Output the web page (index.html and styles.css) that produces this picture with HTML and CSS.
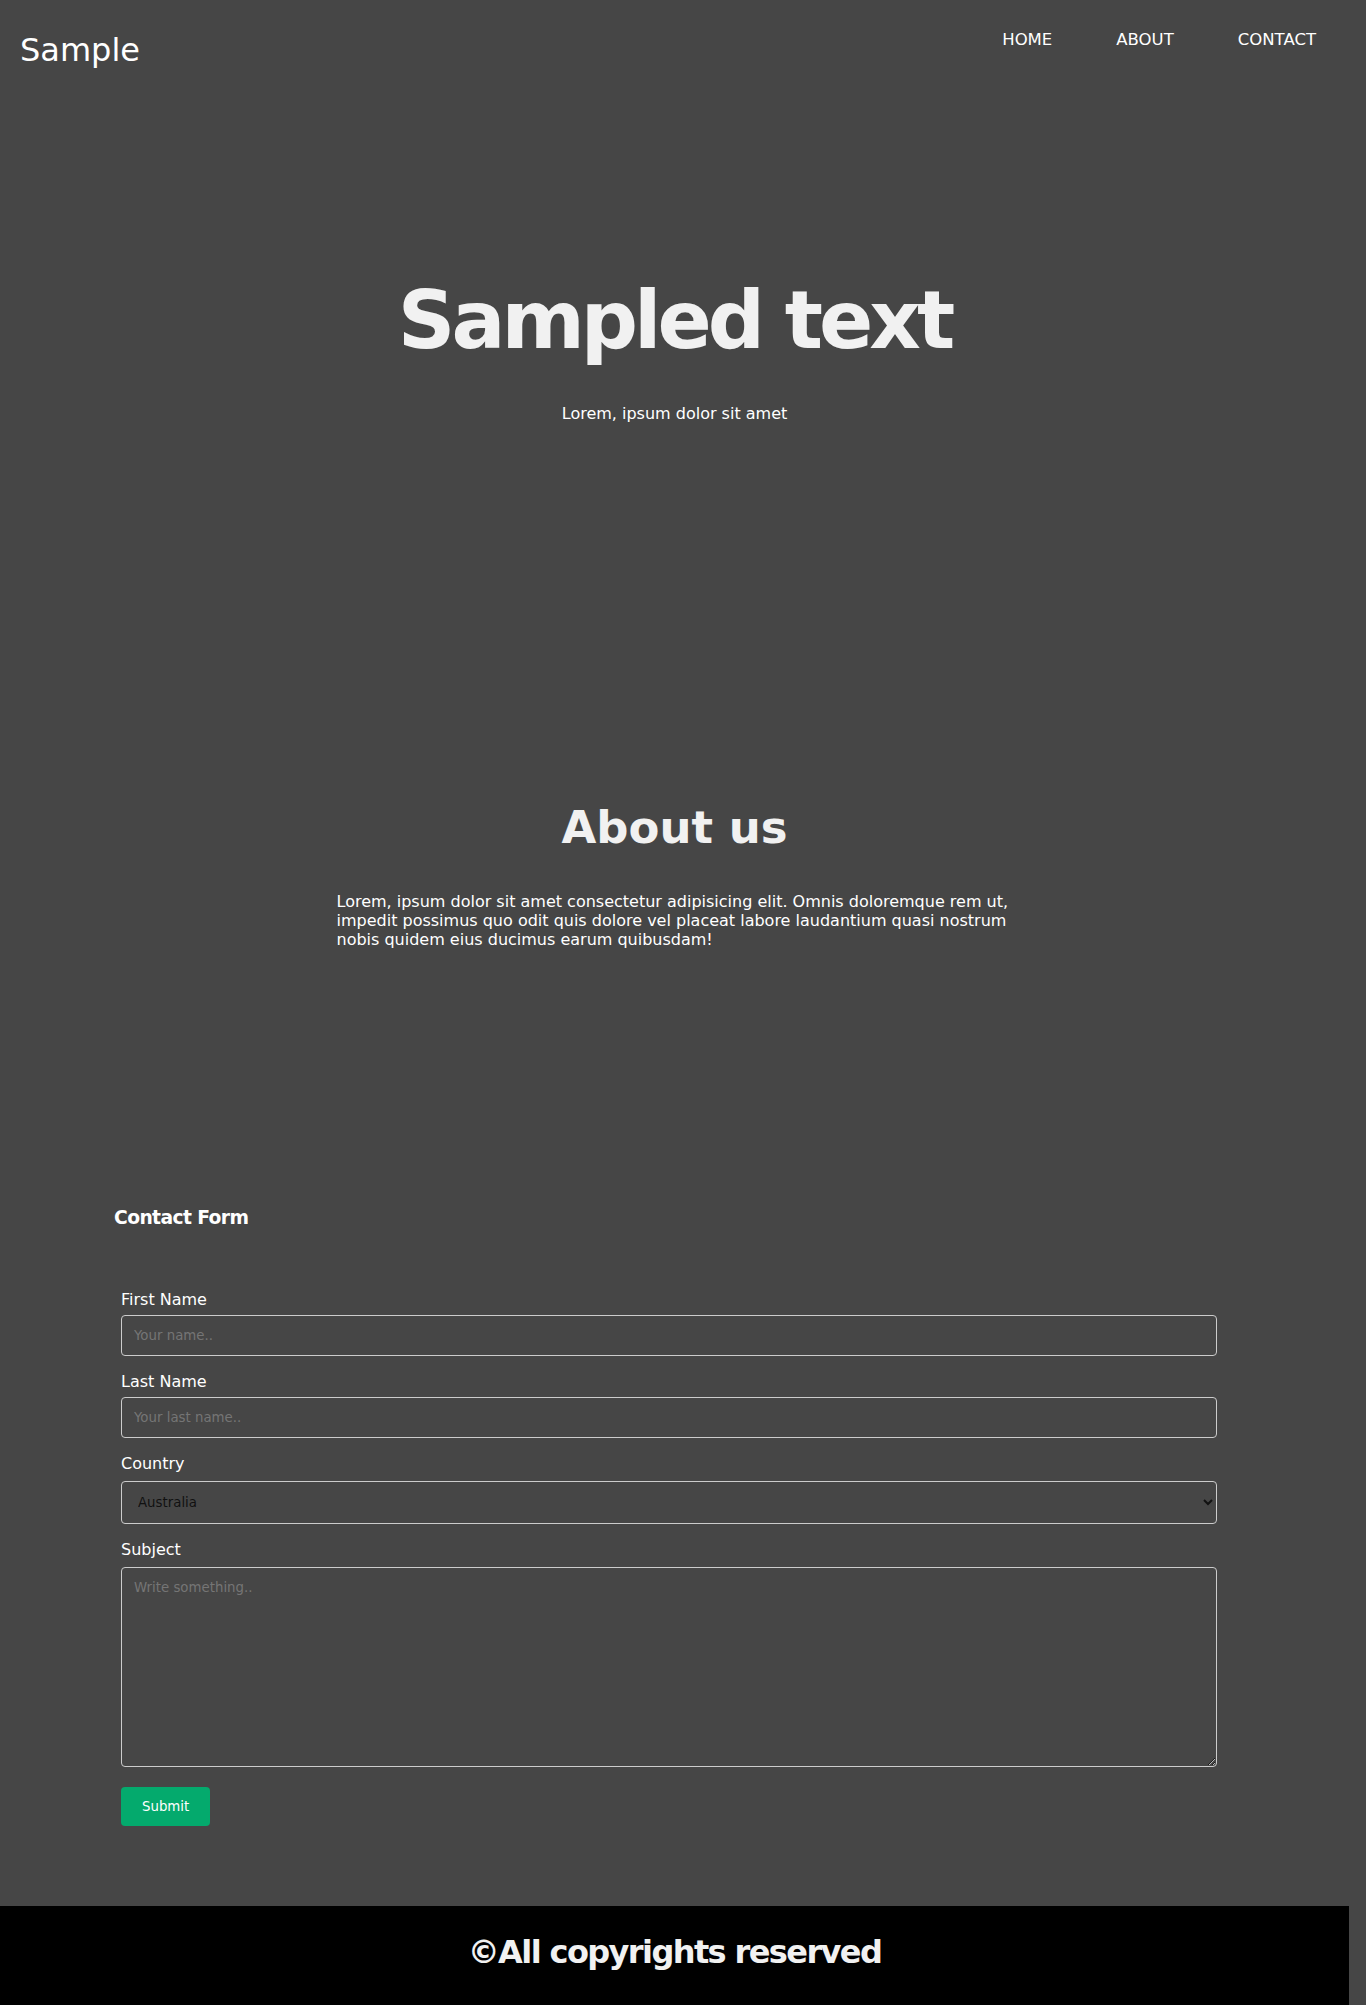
FILE: index.html
```html
<!DOCTYPE html>
<html lang="en">
<head>
<meta charset="utf-8">
<title>Sample</title>
<link rel="stylesheet" href="styles.css">
</head>
<body>
<div class="page">
  <header class="site-header">
    <div class="logo">Sample</div>
    <nav class="nav">
      <a href="#" class="nav-link">HOME</a>
      <a href="#" class="nav-link">ABOUT</a>
      <a href="#" class="nav-link">CONTACT</a>
    </nav>
  </header>

  <section class="hero">
    <h1 class="hero-title">Sampled text</h1>
    <p class="hero-sub">Lorem, ipsum dolor sit amet</p>
  </section>

  <section class="about">
    <h2 class="about-title">About us</h2>
    <p class="about-text">Lorem, ipsum dolor sit amet consectetur adipisicing elit. Omnis doloremque rem ut, impedit possimus quo odit quis dolore vel placeat labore laudantium quasi nostrum nobis quidem eius ducimus earum quibusdam!</p>
  </section>

  <section class="contact">
    <h3 class="contact-title">Contact Form</h3>
    <form class="contact-form">
      <label class="field-label" for="fname">First Name</label>
      <input class="field-input" type="text" id="fname" placeholder="Your name..">
      <label class="field-label" for="lname">Last Name</label>
      <input class="field-input" type="text" id="lname" placeholder="Your last name..">
      <label class="field-label" for="country">Country</label>
      <select class="field-select" id="country">
        <option>Australia</option>
        <option>Canada</option>
        <option>USA</option>
      </select>
      <label class="field-label" for="subject">Subject</label>
      <textarea class="field-textarea" id="subject" placeholder="Write something.."></textarea>
      <button type="button" class="submit-btn">Submit</button>
    </form>
  </section>

  <footer class="site-footer">
    <h2 class="footer-text">&copy;All copyrights reserved</h2>
  </footer>
</div>
</body>
</html>
```
FILE: styles.css
```css
html {
  background: #464646;
}
body {
  margin: 0;
  background: #464646;
  color: #ffffff;
  font-family: "DejaVu Sans", "Liberation Sans", sans-serif;
}
.page {
  width: 1349px;
}

/* header */
.site-header {
  display: flex;
  justify-content: space-between;
  align-items: flex-start;
  padding: 0 33px 0 20px;
}
.logo {
  margin-top: 31px;
  font-size: 32px;
  line-height: normal;
  color: #ffffff;
}
.nav {
  display: flex;
  gap: 64px;
  margin-top: 30px;
}
.nav-link {
  color: #ffffff;
  text-decoration: none;
  font-size: 16.5px;
  line-height: normal;
}

/* hero */
.hero {
  padding-top: 205px;
  text-align: center;
}
.hero-title {
  margin: 0;
  font-size: 80px;
  font-weight: bold;
  letter-spacing: -4px;
  line-height: normal;
  color: #f1f1f1;
}
.hero-sub {
  margin: 37px 0 0;
  font-size: 16px;
  line-height: normal;
  color: #ffffff;
}

/* about */
.about {
  margin-top: 378px;
}
.about-title {
  margin: 0;
  text-align: center;
  font-size: 45px;
  font-weight: bold;
  line-height: normal;
  color: #f1f1f1;
}
.about-text {
  width: 676px;
  margin: 38px auto 0;
  font-size: 16px;
  line-height: 19px;
  color: #ffffff;
}

/* contact */
.contact {
  margin-top: 258px;
  padding-left: 114px;
}
.contact-title {
  margin: 0;
  font-size: 18.72px;
  font-weight: bold;
  letter-spacing: -0.6px;
  line-height: normal;
}
.contact-form {
  margin: 62px 0 0 7px;
  width: 1096px;
  display: flex;
  flex-direction: column;
  align-items: flex-start;
}
.field-label {
  display: block;
  font-size: 16px;
  line-height: normal;
  color: #ffffff;
}
.field-input,
.field-select,
.field-textarea {
  box-sizing: border-box;
  width: 100%;
  margin: 6px 0 16px;
  padding: 12px;
  border: 1px solid #cccccc;
  border-radius: 4px;
  background: transparent;
  font-family: "DejaVu Sans", "Liberation Sans", sans-serif;
  font-size: 13.33px;
  line-height: normal;
}
.field-input {
  color: #ffffff;
}
.field-input::placeholder,
.field-textarea::placeholder {
  color: #757575;
}
.field-select {
  margin-top: 8px;
  height: 43px;
  padding: 0 12px;
  color: #111111;
}
.field-textarea {
  margin-top: 8px;
  margin-bottom: 20px;
  height: 200px;
  resize: vertical;
  color: #ffffff;
}
.submit-btn {
  padding: 12px 21px;
  border: none;
  border-radius: 4px;
  background: #04aa6d;
  color: #ffffff;
  font-family: "DejaVu Sans", "Liberation Sans", sans-serif;
  font-size: 13.33px;
  line-height: normal;
  cursor: pointer;
}

/* footer */
.site-footer {
  margin-top: 80px;
  height: 100px;
  box-sizing: border-box;
  padding-top: 27px;
  background: #000000;
  text-align: center;
}
.footer-text {
  margin: 0;
  font-size: 32px;
  font-weight: bold;
  letter-spacing: -1.6px;
  line-height: normal;
  color: #f1f1f1;
}
```
